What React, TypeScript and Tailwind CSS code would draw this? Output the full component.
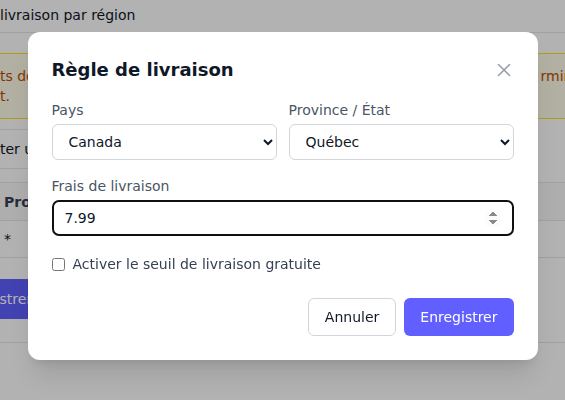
import React from "react";

export default function App() {
  return (
    <div className="relative h-[400px] w-[565px] overflow-hidden bg-white font-['DejaVu_Sans',sans-serif]">
      {/* page behind the dialog */}
      <div>
        <div className="flex h-[33px] items-center border-b border-gray-200 text-sm text-gray-900">
          <span className="pb-[2px]">livraison par région</span>
        </div>
        <div className="mt-5 border-y border-yellow-300 bg-yellow-50 py-3 text-sm leading-5 text-amber-700">
          <div className="flex whitespace-nowrap">
            <span>ts doivent être configurés</span>
            <span className="-mr-[25px] ml-auto">rminer.</span>
          </div>
          <div>t.</div>
        </div>
        <div className="mt-[10px] flex h-10 w-[300px] items-center border-y border-r border-gray-200 text-sm text-gray-900">
          ter une règle
        </div>
        <div className="mt-[13px] border-y border-gray-200">
          <div className="flex h-[37px] items-center bg-gray-50 pl-1 text-sm font-bold text-gray-700">
            Province
          </div>
          <div className="flex h-[37px] items-center border-t border-gray-200 pl-1 text-sm text-gray-900">
            *
          </div>
        </div>
        <button className="-ml-[61px] mt-[21px] flex h-10 items-center rounded-md bg-indigo-500 px-4 text-sm text-white">
          Enregistrer
        </button>
        <div className="mt-[23px] border-t border-gray-200" />
      </div>

      {/* dialog overlay */}
      <div className="absolute inset-0 flex justify-center bg-black/30 pt-8">
        <div className="h-fit w-[510px] rounded-xl bg-white p-6 shadow-xl">
          <div className="flex items-center justify-between">
            <h2 className="text-lg font-bold leading-7 text-gray-900">Règle de livraison</h2>
            <button className="flex h-5 w-5 items-center justify-center text-gray-400">
              <svg width="14" height="14" viewBox="0 0 14 14" fill="none" stroke="currentColor" strokeWidth="1.6" strokeLinecap="round">
                <path d="M1.5 1.5 12.5 12.5" />
                <path d="M12.5 1.5 1.5 12.5" />
              </svg>
            </button>
          </div>

          <div className="mt-4 grid grid-cols-2 gap-3">
            <div>
              <label className="mb-1 block text-sm leading-5 text-gray-600">Pays</label>
              <select className="h-9 w-full rounded-md border border-gray-300 bg-white px-3 text-sm text-gray-900">
                <option>Canada</option>
              </select>
            </div>
            <div>
              <label className="mb-1 block text-sm leading-5 text-gray-600">Province / État</label>
              <select className="h-9 w-full rounded-md border border-gray-300 bg-white px-3 text-sm text-gray-900">
                <option>Québec</option>
              </select>
            </div>
          </div>

          <div className="mt-4">
            <label className="mb-1 block text-sm leading-5 text-gray-600">Frais de livraison</label>
            <input
              type="number"
              step="0.01"
              defaultValue="7.99"
              autoFocus
              className="h-9 w-full rounded-md border border-gray-300 px-3 text-sm text-gray-900"
            />
          </div>

          <label className="mt-[18px] flex items-center gap-2 text-sm leading-5 text-gray-700">
            <input type="checkbox" className="m-0 h-[13px] w-[13px]" />
            Activer le seuil de livraison gratuite
          </label>

          <div className="mt-6 flex justify-end gap-2">
            <button className="h-[38px] rounded-md border border-gray-300 bg-white px-4 text-sm text-gray-900">
              Annuler
            </button>
            <button className="h-[38px] rounded-md bg-indigo-500 px-4 text-sm text-white">
              Enregistrer
            </button>
          </div>
        </div>
      </div>
    </div>
  );
}
